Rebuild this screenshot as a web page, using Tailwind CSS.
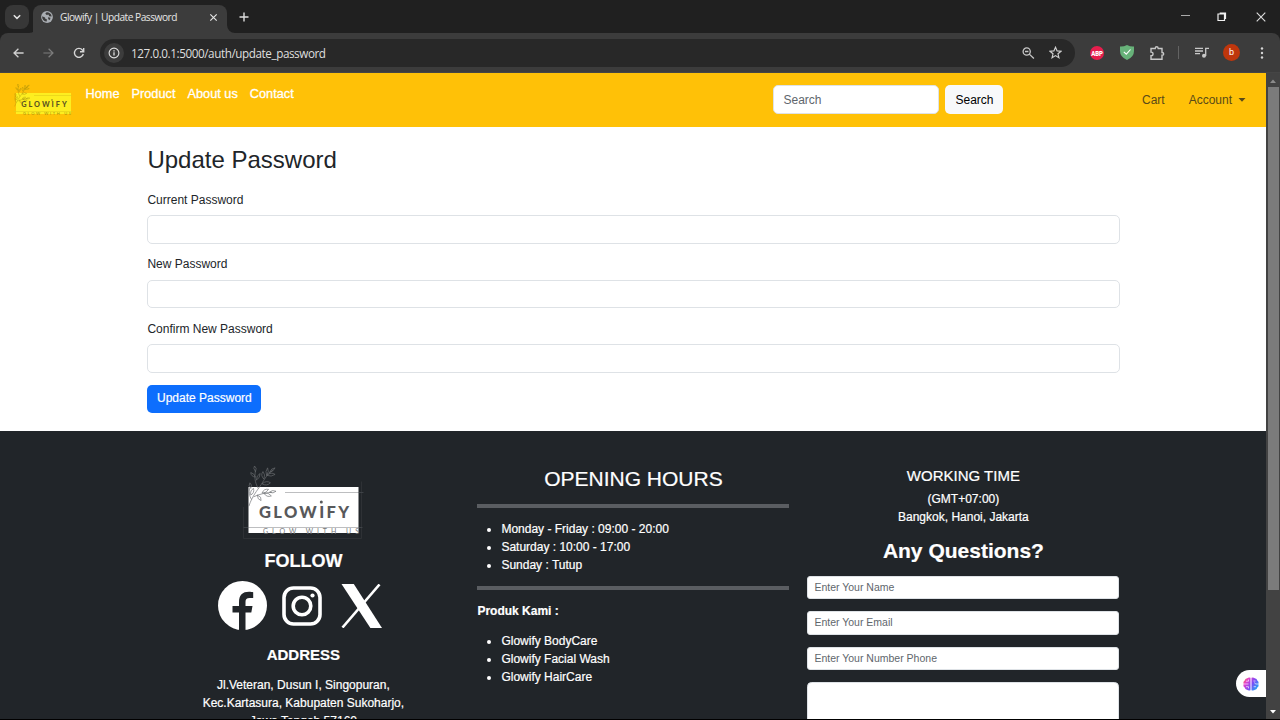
<!DOCTYPE html>
<html lang="en">
<head>
<meta charset="utf-8">
<title>Glowify | Update Password</title>
<script src="https://cdn.jsdelivr.net/npm/@tailwindcss/browser@4"></script>
</head>
<body class="relative flex h-[720px] w-[1280px] flex-col overflow-hidden bg-black font-['Liberation_Sans',Arial,sans-serif] text-[12px] leading-[18px] text-[#212529]">

<svg class="hidden">
  <symbol id="sprig" viewBox="0 0 34 46">
    <g fill="none" stroke="currentColor" stroke-width=".7">
      <path d="M3 43C6 33 12 26 16 20S22 9 29 4M13 24C9 17 9 12 10 5M8 33C14 30 20 29 28 28M6 36C3 32 3 26 4 23"/>
      <path d="M10 6q-3-4-1-6q3 2 1 6M10 12q-5-1-5-5q4 1 5 5M11 15q4-2 4-7q-4 2-4 7M19 14q-4-4-1-8q3 3 1 8M22 10q-2-4 1-8q2 4-1 8M22 10q5 2 9-1q-4-3-9 1M25 7q4-1 6-5q-4 0-6 5M17 19q5 3 9-1q-4-3-9 1M17 29q2-5 7-4q-2 4-7 4M19 29q3 5 8 3q-3-4-8-3M25 28q3-3 7-1q-3 3-7 1M12 31q0 5 4 6q1-4-4-6M5 24q-3-3-1-6q3 2 1 6M5 31q4-2 3-7q-4 2-3 7"/>
    </g>
  </symbol>
</svg>

<!-- Tab strip -->
<div class="flex h-[33px] shrink-0 items-start bg-[#202020] pl-[5px]">
  <div class="mt-[5px] flex h-6 w-6 items-center justify-center rounded-lg bg-[#373737]">
    <svg width="8" height="6" viewBox="0 0 8 6" fill="none" stroke="#e3e3e3" stroke-width="1.5"><path d="M.8 1.2 4 4.4 7.2 1.2"/></svg>
  </div>
  <svg class="mt-[25px]" width="8" height="8" viewBox="0 0 8 8"><path d="M8 0v8H0a8 8 0 0 0 8-8" fill="#3c3c3c"/></svg>
  <div class="-ml-[4px] mt-[5px] flex h-[28px] w-[194px] items-center rounded-t-lg bg-[#3c3c3c] pb-[4px] pl-[8px] pr-[9px]">
    <svg class="shrink-0" width="12" height="12" viewBox="0 0 12 12"><circle cx="6" cy="6" r="5.9" fill="#a9adb2"/><path d="M1.2 5.2 4 6.4l.3 1.3 1.5.6v2.3A4.7 4.7 0 0 1 1.2 5.2M5.2 1.4l-.9 1.4 1.4 1.1 1.8-.3.7 1.7 2.5.1A4.8 4.8 0 0 0 5.2 1.4M7 6.3l2.5.4-.6 2.3-1.6-.8z" fill="#3c3c3c"/></svg>
    <span class="ml-[7px] flex-1 whitespace-nowrap font-['Open_Sans','Noto_Sans',sans-serif] text-[10.2px] tracking-[-0.5px] text-[#e6e6e6]">Glowify | Update Password</span>
    <svg width="9" height="9" viewBox="0 0 9 9" stroke="#e3e3e3" stroke-width="1.2"><path d="m1.3 1.3 6.4 6.4M7.7 1.3 1.3 7.7"/></svg>
  </div>
  <svg class="mt-[25px]" width="8" height="8" viewBox="0 0 8 8"><path d="M0 0v8h8a8 8 0 0 1-8-8" fill="#3c3c3c"/></svg>
  <svg class="ml-[4px] mt-[12px]" width="10" height="10" viewBox="0 0 10 10" stroke="#dedede" stroke-width="1.4"><path d="M5 .5v9M.5 5h9"/></svg>
  <div class="ml-auto flex items-center pt-[11px]">
    <svg class="mr-[27.500px]" width="9" height="9" viewBox="0 0 9 9" stroke="#aaa" stroke-width="1"><path d="M0 3.500h9"/></svg>
    <svg class="mr-[29px]" width="10" height="11" viewBox="0 0 10 11" fill="none" stroke="#f1f1f1" stroke-width="1.200"><path d="M1 3h6.500v6.500H1zM2.700 2.200H8.500V8"/></svg>
    <svg class="mr-[14px]" width="10" height="10" viewBox="0 0 10 10" stroke="#dedede" stroke-width="1.100"><path d="m.7.7 8.600 8.600M9.300.7.7 9.300"/></svg>
  </div>
</div>

<!-- Toolbar -->
<div class="h-10 shrink-0 bg-[#202020]">
<div class="flex h-10 items-center rounded-t-lg border-b border-[#454545] bg-[#3c3c3c] pl-[13px]">
  <svg width="11" height="10" viewBox="0 0 11 10" fill="none" stroke="#d0d0d0" stroke-width="1.300"><path d="M10.600 5H1.200M5.400.7 1 5l4.400 4.300"/></svg>
  <svg class="ml-[19px]" width="11" height="10" viewBox="0 0 11 10" fill="none" stroke="#7d7d7d" stroke-width="1.200"><path d="M.4 5h9.400M5.600.7 10 5 5.600 9.300"/></svg>
  <svg class="ml-[18.500px]" width="12" height="12" viewBox="0 0 12 12" fill="none" stroke="#d6d6d6" stroke-width="1.400"><path d="M10.300 7A4.500 4.500 0 1 1 9.400 3L10.600 4.300M10.700 1v3.700H7"/></svg>
  <div class="ml-[15.500px] flex h-[28px] w-[975px] items-center rounded-full bg-[#282828] pl-[4px] pr-[13px]">
    <div class="flex h-5 w-5 items-center justify-center rounded-full bg-[#3c3c3c]">
      <svg width="12" height="12" viewBox="0 0 12 12" fill="none" stroke="#e0e0e0" stroke-width="1.100"><circle cx="6" cy="6" r="4.900"/><path d="M6 5.300v3.200M6 3.200v1.300" stroke-width="1.300"/></svg>
    </div>
    <span class="ml-[7px] flex-1 whitespace-nowrap font-['Open_Sans','Noto_Sans',sans-serif] text-[11.700px] tracking-[-0.420px] text-[#dfdfdf]">127.0.0.1:5000/auth/update_password</span>
    <svg width="13" height="12" viewBox="0 0 13 12" fill="none" stroke="#c7c7c7" stroke-width="1.300"><circle cx="4.700" cy="4.500" r="3.600"/><path d="m7.300 7.100 4.600 4.400M3 4.500h3.400"/></svg>
    <svg class="ml-[14px]" width="13" height="13" viewBox="0 0 13 13" fill="none" stroke="#d0d0d0" stroke-width="1.200"><path d="m6.500 1.300 1.600 3.600 3.900.3-3 2.600.9 3.900-3.400-2.100-3.400 2.100.9-3.900-3-2.600 3.900-.3z"/></svg>
  </div>
  <svg class="ml-[15px]" width="14" height="14" viewBox="0 0 14 14"><circle cx="7" cy="7" r="7" fill="#e61e4d"/><text x="1.200" y="9.600" font-family="Roboto" font-weight="900" font-size="7" textLength="11.800" lengthAdjust="spacingAndGlyphs" fill="#fff">ABP</text></svg>
  <svg class="ml-[16px]" width="14" height="15" viewBox="0 0 14 15"><path d="M7 0q3.500 1.800 7 1.500V6q0 6-7 9-7-3-7-9V1.500Q3.500 1.800 7 0" fill="#67b279"/><path d="m3.800 6.800 2.500 2.400 4.200-4.700" fill="none" stroke="#fff" stroke-width="1.100"/></svg>
  <svg class="ml-[16px]" width="15" height="14" viewBox="0 0 15 14" fill="none" stroke="#c8c8c8" stroke-width="1.400"><path d="M1 2.500h4.200q.1-1.700 1.500-1.700t1.500 1.700H12v4q1.700 0 1.700 1.400T12 9.300v3.900H1V9.700q2 0 2-1.800T1 6.100z"/></svg>
  <div class="ml-[13px] h-[13px] w-px bg-[#636363]"></div>
  <svg class="ml-[16px]" width="14" height="11" viewBox="0 0 14 11" fill="none" stroke="#c8c8c8" stroke-width="1.300"><path d="M0 1.300h8M0 4h8M0 6.700h5M10.700 9V1.300H14"/><circle cx="9" cy="8.800" r="2" fill="#c8c8c8" stroke="none"/></svg>
  <div class="ml-[14px] flex h-[17px] w-[17px] items-center justify-center rounded-full bg-[#bf360c] pb-px text-[9px] leading-none text-white">b</div>
  <svg class="ml-[20px]" width="4" height="12" viewBox="0 0 4 12" fill="#d6d6d6"><circle cx="2" cy="1.500" r="1.200"/><circle cx="2" cy="6" r="1.200"/><circle cx="2" cy="10.500" r="1.200"/></svg>
</div>
</div>

<!-- Page viewport -->
<div class="flex h-[646px] shrink-0 overflow-hidden">
  <div class="relative flex h-full w-[1266px] flex-col overflow-hidden bg-white">

    <nav class="flex h-[54px] shrink-0 items-center bg-[#ffc107] pb-px pl-[12px] pr-[20px]">
      <svg width="61" height="36" viewBox="0 0 61 36" class="text-[#a08a0c]">
        <rect x="4" y="11" width="55" height="21" fill="#fdee20"/>
        <path d="M22 13.500h38M2 29.500h59" stroke="#e0cc18" stroke-width=".6"/>
        <use href="#sprig" x="1" y="2" width="18" height="24"/>
        <text x="9.200" y="25" font-family="Lato" font-weight="900" font-size="7.300" textLength="45.500" fill="#5c5520">GLOWIFY</text>
        <circle cx="40" cy="18" r=".7" fill="#5c5520"/>
        <text x="11" y="32.500" font-family="Lato" font-size="4" textLength="48" fill="#a58e0b">GLOW WITH US</text>
      </svg>
      <div class="mb-[11px] ml-[12.500px] flex gap-[12px] text-[12.750px] text-white [-webkit-text-stroke:0.3px_white]">
        <a>Home</a><a>Product</a><a>About us</a><a>Contact</a>
      </div>
      <div class="ml-auto flex gap-[6px]">
        <div class="h-[29px] w-[166px] rounded-[5px] border border-[#dee2e6] bg-white px-[9px] py-[4.500px] text-[#60666c]">Search</div>
        <div class="h-[29px] w-[58px] rounded-[5px] bg-[#f8f9fa] py-[5.500px] text-center text-black">Search</div>
      </div>
      <div class="ml-[138.500px] flex items-center text-[#594a18]">
        <span>Cart</span><span class="ml-[24px]">Account</span>
        <svg class="ml-[6px]" width="8" height="4" viewBox="0 0 8 4" fill="currentColor"><path d="M.5 0h7L4 3.700z"/></svg>
      </div>
    </nav>

    <main class="h-[304px] shrink-0 px-[147.400px] pt-[17.500px]">
      <h2 class="h-[46px] text-[24px] leading-[29px]">Update Password</h2>
      <label class="block h-[24.500px]">Current Password</label>
      <div class="h-[28.500px] w-[972.500px] rounded-[5px] border border-[#dee2e6]"></div>
      <label class="mt-[11.500px] block h-[24.500px]">New Password</label>
      <div class="h-[28.500px] w-[972.500px] rounded-[5px] border border-[#dee2e6]"></div>
      <label class="mt-[11.500px] block h-[24.500px]">Confirm New Password</label>
      <div class="h-[28.500px] w-[972.500px] rounded-[5px] border border-[#dee2e6]"></div>
      <div class="mt-[12px] h-[28px] w-[114px] rounded-[5px] bg-[#0d6efd] pt-[4px] text-center text-white [-webkit-text-stroke:0.200px_white]">Update Password</div>
    </main>

    <footer class="grid h-[289px] shrink-0 grid-cols-[312px_312px_312px] gap-[18px] bg-[#212529] px-[147.400px] text-white [-webkit-text-stroke:0.200px]">
      <section class="flex flex-col items-center pt-[34px] text-center">
        <svg width="122" height="76" viewBox="0 0 122 76" class="text-[#6c6f72] [-webkit-text-stroke:0]">
          <path d="M1.500 42v31.500h118V16.500" fill="none" stroke="#33373b" stroke-width=".7"/>
          <rect x="6.500" y="22" width="110" height="46" fill="#fff"/>
          <path d="M43 27.500h73M6.500 62.500h110" stroke="#b5b7b9" stroke-width=".9"/>
          <path d="M116.500 27.500h5M1.500 62.500h5M116.500 62.500h4" stroke="#44484c" stroke-width=".8"/>
          <use href="#sprig" x="3" y="1" width="34" height="43"/>
          <text x="17" y="52.500" font-family="Lato" font-weight="900" font-size="16.500" textLength="90" fill="#58595b">GLOWIFY</text>
          <circle cx="79.300" cy="37" r="1.500" fill="#58595b"/>
          <text x="21" y="68.500" font-family="Lato" font-size="7" textLength="96" fill="#77797b">GLOW WITH US</text>
        </svg>
        <h4 class="mt-[8.500px] text-[18px] font-bold leading-[22px]">FOLLOW</h4>
        <div class="mt-[9.500px] flex items-center pr-[5px]">
          <svg width="49" height="49" viewBox="0 0 49 49"><circle cx="24.500" cy="24.500" r="24.500" fill="#fff"/><path d="M21 49V31.500h-6.500V25H21v-3.500c0-7.500 3.500-10.700 10-10.700 1.600 0 3.200.2 4.200.4v5.900h-3.500c-3.200 0-4.200 1.300-4.200 4V25h7l-1.200 6.500h-5.800V49" fill="#212529"/></svg>
          <svg class="ml-[15px]" width="40" height="40" viewBox="0 0 40 40" fill="none" stroke="#fff" stroke-width="3.600"><rect x="2" y="2" width="36" height="36" rx="9.500"/><circle cx="20" cy="20" r="8.800"/><circle cx="30.500" cy="9.500" r="2.100" fill="#fff" stroke="none"/></svg>
          <svg class="ml-[19px]" width="42" height="44" viewBox="0 0 42 44"><path d="M38.500.5 1.500 43.500" stroke="#fff" stroke-width="2.600"/><path d="M.5 0h12.300l28.200 44H29.400z" fill="#fff"/></svg>
        </div>
        <h5 class="mt-[16px] text-[15px] font-bold leading-[18px]">ADDRESS</h5>
        <p class="mt-[12px]">Jl.Veteran, Dusun I, Singopuran,<br>Kec.Kartasura, Kabupaten Sukoharjo,<br>Jawa Tengah 57160</p>
      </section>

      <section class="pt-[35px]">
        <h3 class="text-center text-[21px] leading-[26px]">OPENING HOURS</h3>
        <div class="mt-[12px] h-[4px] bg-[#5a5d61]"></div>
        <ul class="mt-[12px] list-disc pl-[24px]"><li>Monday - Friday : 09:00 - 20:00</li><li>Saturday : 10:00 - 17:00</li><li>Sunday : Tutup</li></ul>
        <div class="mt-[12px] h-[4px] bg-[#5a5d61]"></div>
        <p class="mt-[12px] font-bold">Produk Kami :</p>
        <ul class="mt-[12px] list-disc pl-[24px]"><li>Glowify BodyCare</li><li>Glowify Facial Wash</li><li>Glowify HairCare</li></ul>
      </section>

      <section class="flex flex-col pt-[35.500px] text-center">
        <h5 class="text-[15px] leading-[18px]">WORKING TIME</h5>
        <p class="mt-[5.500px]">(GMT+07:00)<br>Bangkok, Hanoi, Jakarta</p>
        <h3 class="mt-[12px] text-[21px] font-bold leading-[26px]">Any Questions?</h3>
        <div class="mt-[12px] flex flex-col gap-[12px] text-left text-[10.500px] leading-[15px] text-[#60666c] [-webkit-text-stroke:0]">
          <div class="h-[23.250px] rounded-[3px] border border-[#dee2e6] bg-white px-[6px] py-[3px]">Enter Your Name</div>
          <div class="h-[23.250px] rounded-[3px] border border-[#dee2e6] bg-white px-[6px] py-[3px]">Enter Your Email</div>
          <div class="h-[23.250px] rounded-[3px] border border-[#dee2e6] bg-white px-[6px] py-[3px]">Enter Your Number Phone</div>
          <div class="h-[60px] rounded-[4.500px] border border-[#dee2e6] bg-white"></div>
        </div>
      </section>
    </footer>

    <!-- Floating assistant button -->
    <div class="absolute right-0 top-[597px] flex h-[27px] w-[30px] items-center rounded-l-full bg-white pl-[7px]">
      <svg width="16" height="14" viewBox="0 0 16 14">
        <defs><linearGradient id="brain" x1="0" y1="0" x2="1" y2=".6"><stop offset="0" stop-color="#ff7a3d"/><stop offset=".3" stop-color="#e43fd0"/><stop offset=".65" stop-color="#7b4df5"/><stop offset="1" stop-color="#2f9bf5"/></linearGradient></defs>
        <path d="M7.500.8v12.400Q5.500 14 4 12.700 2 12.800 1.700 10.600-.3 9.200.8 7-.3 4.800 1.700 3.600 2 1.400 4.200 1.200 6-.2 7.500.8M8.500.8v12.400q2 .8 3.500-.5 2 .1 2.300-2.100 2-1.400.9-3.600 1.100-2.200-.9-3.400-.3-2.200-2.500-2.400Q10-.2 8.500.8" fill="url(#brain)"/>
        <path d="M1 7h4.500M3 4.200h2.500V2.500M3 9.700h2.500v1.700M15 7h-2.500l-1-1.500M13 9.700h-2.300M10.500 4h2" fill="none" stroke="#fff" stroke-opacity=".8" stroke-width=".8"/>
      </svg>
    </div>
  </div>

  <!-- Scrollbar -->
  <div class="flex h-full w-[14px] flex-col items-center bg-[#424242]">
    <svg class="mt-[6px] shrink-0" width="6" height="4" viewBox="0 0 6 4" fill="#8b8b8b"><path d="M0 4h6L3 .5z"/></svg>
    <div class="mt-[4px] h-[503px] w-[11px] shrink-0 bg-[#7b7b7b]"></div>
    <svg class="mb-[5px] mt-auto shrink-0" width="6" height="4" viewBox="0 0 6 4" fill="#fff"><path d="M0 0h6L3 3.500z"/></svg>
  </div>
</div>
</body>
</html>
